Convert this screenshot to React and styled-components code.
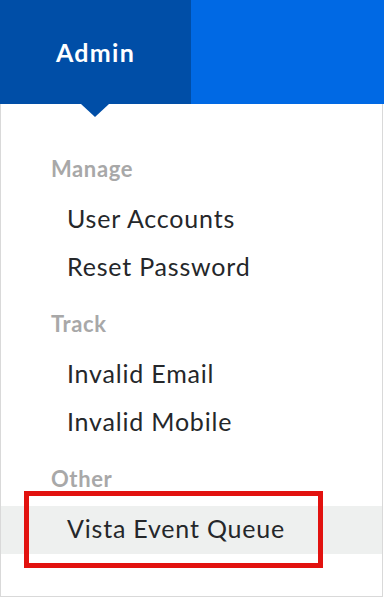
import React from 'react';
import styled, { createGlobalStyle } from 'styled-components';

const GlobalStyle = createGlobalStyle`
  html, body {
    margin: 0;
    padding: 0;
    background: #fff;
  }

  body {
    font-family: Lato, "Open Sans", "Liberation Sans", sans-serif;
    -webkit-font-smoothing: antialiased;
  }
`;

const StyledPage = styled.div`
  width: 384px;
  height: 597px;
  overflow: hidden;
  display: flex;
  flex-direction: column;
`;

const StyledTopBar = styled.header`
  display: flex;
  height: 104px;
  flex-shrink: 0;
  background-color: #0069e4;
`;

const StyledTab = styled.div`
  position: relative;
  width: 191px;
  display: flex;
  align-items: center;
  justify-content: center;
  background-color: ${props => (props.active ? '#004ea7' : 'transparent')};
  color: #fff;
  font-size: 25px;
  font-weight: 700;
  letter-spacing: 1.3px;

  /* the little pointer under the active tab */
  &::after {
    content: '';
    display: ${props => (props.active ? 'block' : 'none')};
    position: absolute;
    left: 81px;
    top: 100%;
    border-left: 14px solid transparent;
    border-right: 14px solid transparent;
    border-top: 13px solid #004ea7;
  }
`;

const StyledPanel = styled.nav`
  flex: 1;
  width: 383px;
  box-sizing: border-box;
  border: 1px solid #d9d9d9;
  border-top: none;
  padding-top: 49px;
`;

const StyledGroup = styled.section`
  & + & {
    margin-top: 16px;
  }
`;

const StyledGroupLabel = styled.div`
  padding-left: 50px;
  padding-bottom: 11px;
  font-size: 22px;
  line-height: 32px;
  font-weight: 700;
  letter-spacing: 0.6px;
  color: #a8a8a8;
`;

const StyledItem = styled.a`
  position: relative;
  display: block;
  height: 48px;
  box-sizing: border-box;
  padding-left: 66px;
  padding-bottom: 4px;
  font-size: 25px;
  line-height: 44px;
  letter-spacing: 0.8px;
  color: #25272a;
  text-decoration: none;
  cursor: pointer;
  background-color: ${props => (props.selected ? '#eef0ef' : 'transparent')};

  &:hover {
    background-color: #eef0ef;
  }
`;

// red callout drawn over the selected row in the screenshot
const StyledCallout = styled.span`
  position: absolute;
  left: 23px;
  top: -15px;
  width: 299px;
  height: 77px;
  box-sizing: border-box;
  border: 5px solid #e2120f;
  pointer-events: none;
`;

const groups = [
  { label: 'Manage', items: ['User Accounts', 'Reset Password'] },
  { label: 'Track', items: ['Invalid Email', 'Invalid Mobile'] },
  { label: 'Other', items: ['Vista Event Queue'] },
];

const selectedItem = 'Vista Event Queue';

const App = () => {
  return (
    <StyledPage>
      <GlobalStyle />

      <StyledTopBar>
        <StyledTab active>Admin</StyledTab>
      </StyledTopBar>

      <StyledPanel>
        {groups.map(group => (
          <StyledGroup key={group.label}>
            <StyledGroupLabel>{group.label}</StyledGroupLabel>
            {group.items.map(item => (
              <StyledItem key={item} selected={item === selectedItem}>
                {item}
                {item === selectedItem && <StyledCallout />}
              </StyledItem>
            ))}
          </StyledGroup>
        ))}
      </StyledPanel>
    </StyledPage>
  );
};

export default App;
